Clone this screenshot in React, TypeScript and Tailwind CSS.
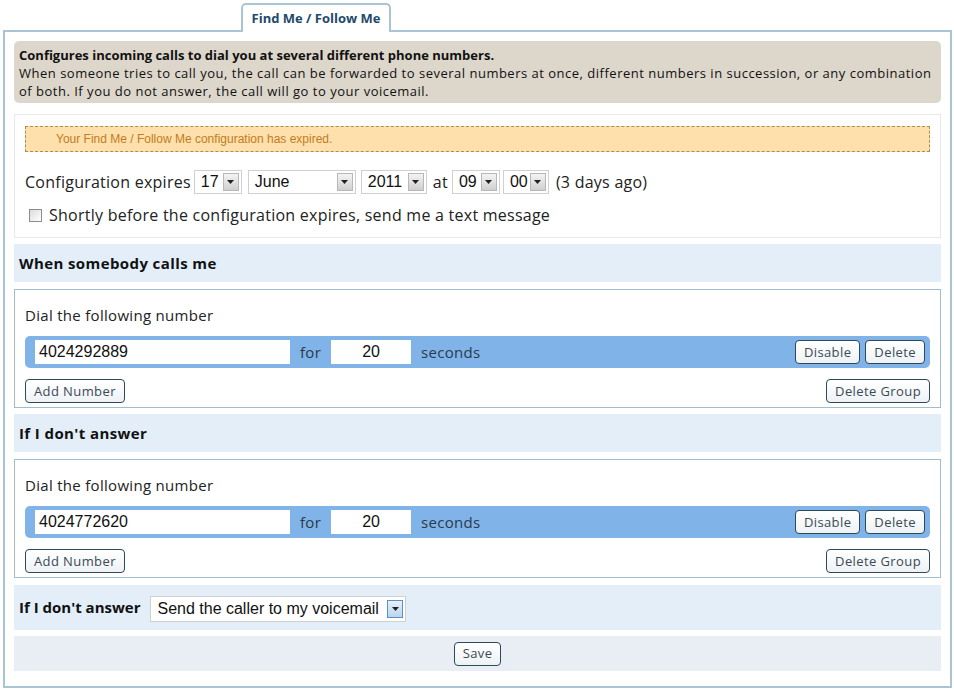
import React from 'react';

const gothic = { fontFamily: '"Open Sans", "DejaVu Sans", sans-serif' };
const arial = { fontFamily: '"Liberation Sans", Arial, sans-serif' };

function Arrow({ focused }: { focused?: boolean }) {
    return (
        <span
            className={
                'flex h-[18px] w-[16px] items-center justify-center border ' +
                (focused
                    ? 'border-[#5c8fc4] bg-gradient-to-b from-[#e6f1fb] to-[#b9d4ee]'
                    : 'border-[#b8b8b8] bg-gradient-to-b from-[#f4f4f4] to-[#cfcfcf]')
            }
        >
            <svg width="7" height="4" viewBox="0 0 7 4">
                <path d="M0 0h7L3.5 4z" fill="#222" />
            </svg>
        </span>
    );
}

function FakeSelect({
    value,
    width,
    focused,
    tall,
}: {
    value: string;
    width: string;
    focused?: boolean;
    tall?: boolean;
}) {
    return (
        <div
            className={`flex ${tall ? 'h-[26px]' : 'h-[24px]'} ${width} items-center justify-between border border-[#d0d0d0] bg-white pl-[6px] pr-[2px] text-[16px] tracking-normal text-[#111]`}
            style={arial}
        >
            <span>{value}</span>
            <Arrow focused={focused} />
        </div>
    );
}

function Btn({ children }: { children: React.ReactNode }) {
    return (
        <button className="h-[24px] rounded-[4px] border border-[#2c4a5a] bg-gradient-to-b from-white to-[#eef2f5] px-[8px] text-[13px] leading-none tracking-[0.4px] text-[#3a4a55]">
            {children}
        </button>
    );
}

function Group({ number }: { number: string }) {
    return (
        <div className="flex h-[119px] flex-col border border-[#a3bccb] bg-white px-[10px]">
            <div className="mt-[15px] text-[15px] leading-[20px] tracking-[0.3px] text-[#222]">Dial the following number</div>
            <div className="mt-[11px] flex h-[32px] items-center rounded-[5px] bg-[#80b3e8] pl-[10px] pr-[5px]">
                <div className="flex h-[24px] w-[255px] items-center bg-white px-[4px] text-[16px] text-[#111]" style={arial}>
                    {number}
                </div>
                <span className="ml-[10px] text-[15px] tracking-[0.3px] text-[#2a3a48]">for</span>
                <div
                    className="ml-[10px] flex h-[24px] w-[80px] items-center justify-center bg-white text-[16px] text-[#111]"
                    style={arial}
                >
                    20
                </div>
                <span className="ml-[10px] text-[15px] tracking-[0.3px] text-[#2a3a48]">seconds</span>
                <div className="ml-auto flex gap-[5px]">
                    <Btn>Disable</Btn>
                    <Btn>Delete</Btn>
                </div>
            </div>
            <div className="mt-[11px] flex justify-between">
                <Btn>Add Number</Btn>
                <Btn>Delete Group</Btn>
            </div>
        </div>
    );
}

function Header({ children }: { children: React.ReactNode }) {
    return (
        <div className="flex h-[38px] items-center bg-[#e3eef9] px-[5px] text-[15px] font-bold tracking-[0.4px] text-[#111]">
            {children}
        </div>
    );
}

export default function App() {
    return (
        <div className="h-[691px] w-[954px] bg-white pt-[3px]" style={gothic}>
            {/* tab */}
            <div className="relative z-10 ml-[241px] flex h-[29px] w-[150px] items-center justify-center rounded-t-[5px] border-2 border-b-0 border-[#a9c4d3] bg-white text-[13px] font-bold text-[#1f4a6a]">
                Find Me / Follow Me
            </div>
            {/* panel */}
            <div className="-mt-[2px] ml-[3px] flex h-[658px] w-[949px] flex-col border-2 border-[#a9c4d3] px-[9px] pt-[9px]">
                <div className="h-[62px] rounded-[5px] bg-[#ddd6cb] px-[5px] pt-[5px] text-[13px] leading-[18px] text-[#111]">
                    <div className="font-bold">Configures incoming calls to dial you at several different phone numbers.</div>
                    <div className="tracking-[0.5px]">
                        When someone tries to call you, the call can be forwarded to several numbers at once, different numbers in
                        succession, or any combination of both. If you do not answer, the call will go to your voicemail.
                    </div>
                </div>

                <div className="mt-[11px] h-[124px] border border-[#e4e8ec] bg-white px-[10px] pt-[11px]">
                    <div
                        className="flex h-[26px] items-center border border-dashed border-[#b38b4f] bg-[#fde0ab] pl-[30px] text-[12px] text-[#c27c1f]"
                        style={arial}
                    >
                        Your Find Me / Follow Me configuration has expired.
                    </div>
                    <div className="mt-[18px] flex items-center text-[16px] tracking-[0.25px] text-[#222]">
                        <span>Configuration expires</span>
                        <div className="ml-[3px]">
                            <FakeSelect value="17" width="w-[48px]" />
                        </div>
                        <div className="ml-[6px]">
                            <FakeSelect value="June" width="w-[108px]" />
                        </div>
                        <div className="ml-[5px]">
                            <FakeSelect value="2011" width="w-[66px]" />
                        </div>
                        <span className="ml-[6px]">at</span>
                        <div className="ml-[4px] flex gap-[3px]">
                            <FakeSelect value="09" width="w-[48px]" />
                            <FakeSelect value="00" width="w-[46px]" />
                        </div>
                        <span className="ml-[7px]">(3 days ago)</span>
                    </div>
                    <div className="mt-[9px] flex items-center gap-[7px] pl-[4px] text-[16px] tracking-[0.25px] text-[#222]">
                        <span className="h-[13px] w-[13px] border border-[#8c8c8c] bg-gradient-to-br from-[#dcdcdc] to-white" />
                        <span>Shortly before the configuration expires, send me a text message</span>
                    </div>
                </div>

                <div className="mt-[6px]">
                    <Header>When somebody calls me</Header>
                </div>
                <div className="mt-[7px]">
                    <Group number="4024292889" />
                </div>
                <div className="mt-[6px]">
                    <Header>If I don't answer</Header>
                </div>
                <div className="mt-[7px]">
                    <Group number="4024772620" />
                </div>

                <div className="mt-[7px] flex h-[45px] items-center gap-[10px] bg-[#e3eef9] px-[5px]">
                    <span className="text-[15px] font-bold text-[#111]">If I don't answer</span>
                    <div className="mt-[2px]">
                        <FakeSelect value="Send the caller to my voicemail" width="w-[256px]" focused tall />
                    </div>
                </div>

                <div className="mt-[6px] flex h-[35px] items-center justify-center bg-[#e9eef5]">
                    <Btn>Save</Btn>
                </div>
            </div>
        </div>
    );
}
